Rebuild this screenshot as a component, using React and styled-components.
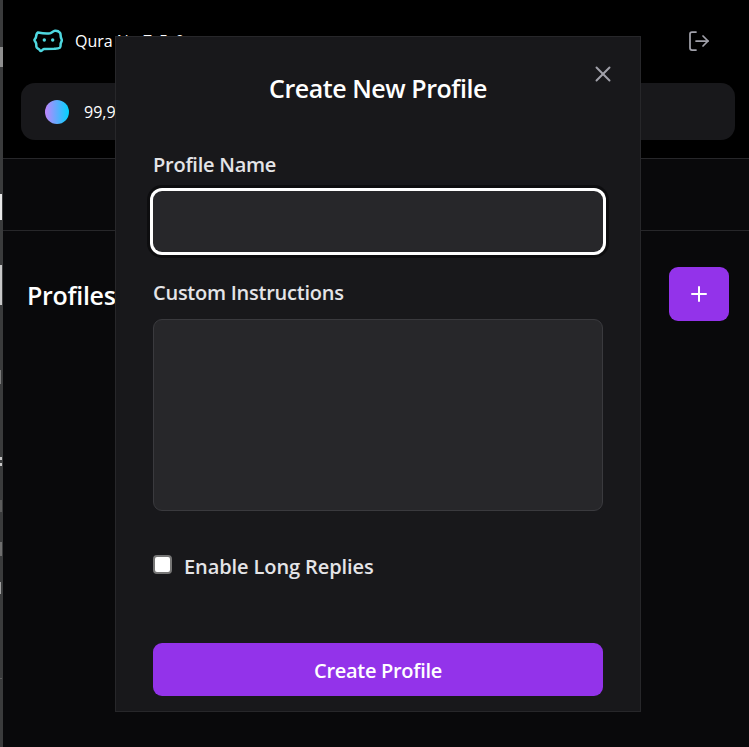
import React from 'react'
import styled, { createGlobalStyle } from 'styled-components'
import { LogOut, Plus, X } from 'lucide-react'

const Global = createGlobalStyle`
  html, body {
    margin: 0;
    height: 100%;
    overflow: hidden;
    background: #09090b;
    font-family: 'Open Sans', 'Noto Sans', sans-serif;
  }
  * { box-sizing: border-box; }
`
const Shell = styled.div`
  display: flex;
  height: 747px;
`
const EdgeStrip = styled.div`
  position: relative;
  width: 3px;
  flex-shrink: 0;
  background: #3a3b3c;
`
const EdgeMark = styled.div`
  position: absolute;
  left: 0;
  top: ${p => p.$top}px;
  height: ${p => p.$h}px;
  width: ${p => p.$w || 2}px;
  background: ${p => p.$color || '#8a8a8a'};
`
const Main = styled.div`
  flex: 1;
  display: flex;
  flex-direction: column;
  background: #09090b;
`
const Header = styled.header`
  background: #000;
  height: 159px;
  padding: 24px 14px 0 18px;
  border-bottom: 1px solid #27272a;
`
const TopBar = styled.div`
  display: flex;
  align-items: center;
  justify-content: space-between;
  height: 34px;
  padding: 0 24px 0 12px;
`
const Brand = styled.div`
  display: flex;
  align-items: center;
  gap: 12px;
  color: #fff;
  font-size: 16px;
`
const Version = styled.span`
  margin-left: 14px;
  letter-spacing: 1.4px;
`
const ExitIcon = styled(LogOut)`
  color: #a1a1aa;
`
const BalanceCard = styled.div`
  display: flex;
  align-items: center;
  gap: 15px;
  height: 57px;
  margin-top: 25px;
  padding: 0 24px;
  background: #18181b;
  border-radius: 14px;
  color: #fff;
  font-size: 16px;
`
const Orb = styled.div`
  width: 24px;
  height: 24px;
  border-radius: 50%;
  background: linear-gradient(90deg, #c084fc, #00d4ff);
`
const TabRow = styled.div`
  height: 72px;
  border-bottom: 1px solid #27272a;
`
const ProfilesHead = styled.div`
  display: flex;
  align-items: center;
  justify-content: space-between;
  padding: 36px 20px 0 24px;
`
const ProfilesTitle = styled.h2`
  margin: 2px 0 0;
  color: #fff;
  font-size: 25px;
  font-weight: 600;
  letter-spacing: -0.3px;
`
const AddButton = styled.button`
  display: flex;
  align-items: center;
  justify-content: center;
  width: 60px;
  height: 54px;
  border: 0;
  border-radius: 9px;
  background: #9333ea;
  color: #fff;
`
const Modal = styled.div`
  position: fixed;
  left: 115px;
  top: 36px;
  width: 526px;
  height: 676px;
  padding: 0 37px;
  display: flex;
  flex-direction: column;
  background: #18181b;
  border: 1px solid #27272a;
`
const CloseButton = styled.button`
  position: absolute;
  right: 24px;
  top: 24px;
  display: flex;
  padding: 0;
  border: 0;
  background: none;
  color: #a1a1aa;
`
const Title = styled.h2`
  margin: 33px 0 0;
  color: #fff;
  font-size: 25px;
  line-height: 36px;
  font-weight: 600;
  letter-spacing: -0.45px;
  text-align: center;
`
const Label = styled.label`
  display: block;
  margin-top: ${p => p.$top}px;
  color: #e4e4e7;
  font-size: 20px;
  line-height: 28px;
  font-weight: 600;
  letter-spacing: -0.25px;
`
const NameInput = styled.input`
  display: block;
  width: 100%;
  height: 61px;
  margin-top: 12px;
  background: #27272a;
  border: 0;
  border-radius: 9px;
  outline: 0;
  box-shadow: 0 0 0 3px #fff, 0 0 0 6px #0d0d0f;
`
const InstructionsInput = styled.textarea`
  display: block;
  width: 100%;
  height: 192px;
  margin-top: 12px;
  background: #27272a;
  border: 1px solid #3a3a3e;
  border-radius: 9px;
  resize: none;
`
const CheckRow = styled.label`
  display: flex;
  align-items: center;
  gap: 12px;
  margin-top: 42px;
  color: #e4e4e7;
  font-size: 20px;
  line-height: 28px;
  font-weight: 600;
  letter-spacing: -0.1px;
`
const CheckBox = styled.span`
  width: 19px;
  height: 19px;
  margin-top: -6px;
  background: #fff;
  border: 2px solid #767676;
  border-radius: 4px;
`
const SubmitButton = styled.button`
  height: 53px;
  margin-top: 62px;
  padding: 2px 0 0;
  border: 0;
  border-radius: 9px;
  background: #9333ea;
  color: #fff;
  font-family: inherit;
  font-size: 20px;
  font-weight: 600;
  letter-spacing: -0.3px;
`

// the logo is a wobbly speech bubble with two dots
const BubbleLogo = () => (
  <svg width="30" height="24" viewBox="0 0 30 24" fill="none">
    <path
      d="M5 3.5C9 4.2 14 4.6 17 4.2C19 3.8 20 2 22 1.8C24 1.6 26 2.6 27 3.8C27.8 5 27.6 7 27.8 8C28 9.5 29 10.5 28.8 11.5C28.6 12.8 27.8 13.5 27.6 15C27.6 16.5 27.8 18 26.8 18.8C25.5 19.6 23.5 19.6 21 19.8L11 20C9.5 20.2 9 22 7.8 22C6.8 22 6.8 20.4 5.5 19.8C4.4 19.2 3.6 19 3.4 17.8C3.2 16.5 3.4 15 3 14C2.6 12.8 1.4 12 1.4 11C1.6 10 2.8 9.4 3 8C3.2 6.5 3.4 4.2 5 3.5Z"
      stroke="#4fd8e0"
      strokeWidth="2.5"
      strokeLinejoin="round"
    />
    <circle cx="11.3" cy="11" r="1.7" fill="#4fd8e0" />
    <circle cx="19.7" cy="11" r="1.7" fill="#4fd8e0" />
  </svg>
)

const edgeMarks = [
  { top: 47, h: 20, color: '#8f8f8f', w: 3 },
  { top: 194, h: 26, color: '#e8e8e8' },
  { top: 265, h: 40, color: '#c8c8c8' },
  { top: 370, h: 14, color: '#7c7c7c', w: 1 },
  { top: 457, h: 3, color: '#c8c8c8' },
  { top: 463, h: 3, color: '#c8c8c8' },
  { top: 500, h: 12, color: '#5c5c5c' },
  { top: 542, h: 14, color: '#6e6e6e' },
  { top: 582, h: 12, color: '#a0a0a0', w: 1 },
  { top: 678, h: 1, color: '#5c5c5c' },
]

export default function App() {
  return (
    <>
      <Global />
      <Shell>
        <EdgeStrip>
          {edgeMarks.map(m => (
            <EdgeMark key={m.top} $top={m.top} $h={m.h} $w={m.w} $color={m.color} />
          ))}
        </EdgeStrip>
        <Main>
          <Header>
            <TopBar>
              <Brand>
                <BubbleLogo />
                <span>Qura N<Version>7.5.0</Version></span>
              </Brand>
              <ExitIcon size={24} strokeWidth={1.75} />
            </TopBar>
            <BalanceCard>
              <Orb />
              <span>99,999 points</span>
            </BalanceCard>
          </Header>
          <TabRow />
          <ProfilesHead>
            <ProfilesTitle>Profiles</ProfilesTitle>
            <AddButton>
              <Plus size={24} strokeWidth={2} />
            </AddButton>
          </ProfilesHead>
        </Main>
      </Shell>
      <Modal>
        <CloseButton>
          <X size={26} strokeWidth={1.8} />
        </CloseButton>
        <Title>Create New Profile</Title>
        <Label $top={45}>Profile Name</Label>
        <NameInput />
        <Label $top={27}>Custom Instructions</Label>
        <InstructionsInput />
        <CheckRow>
          <CheckBox />
          Enable Long Replies
        </CheckRow>
        <SubmitButton>Create Profile</SubmitButton>
      </Modal>
    </>
  )
}
